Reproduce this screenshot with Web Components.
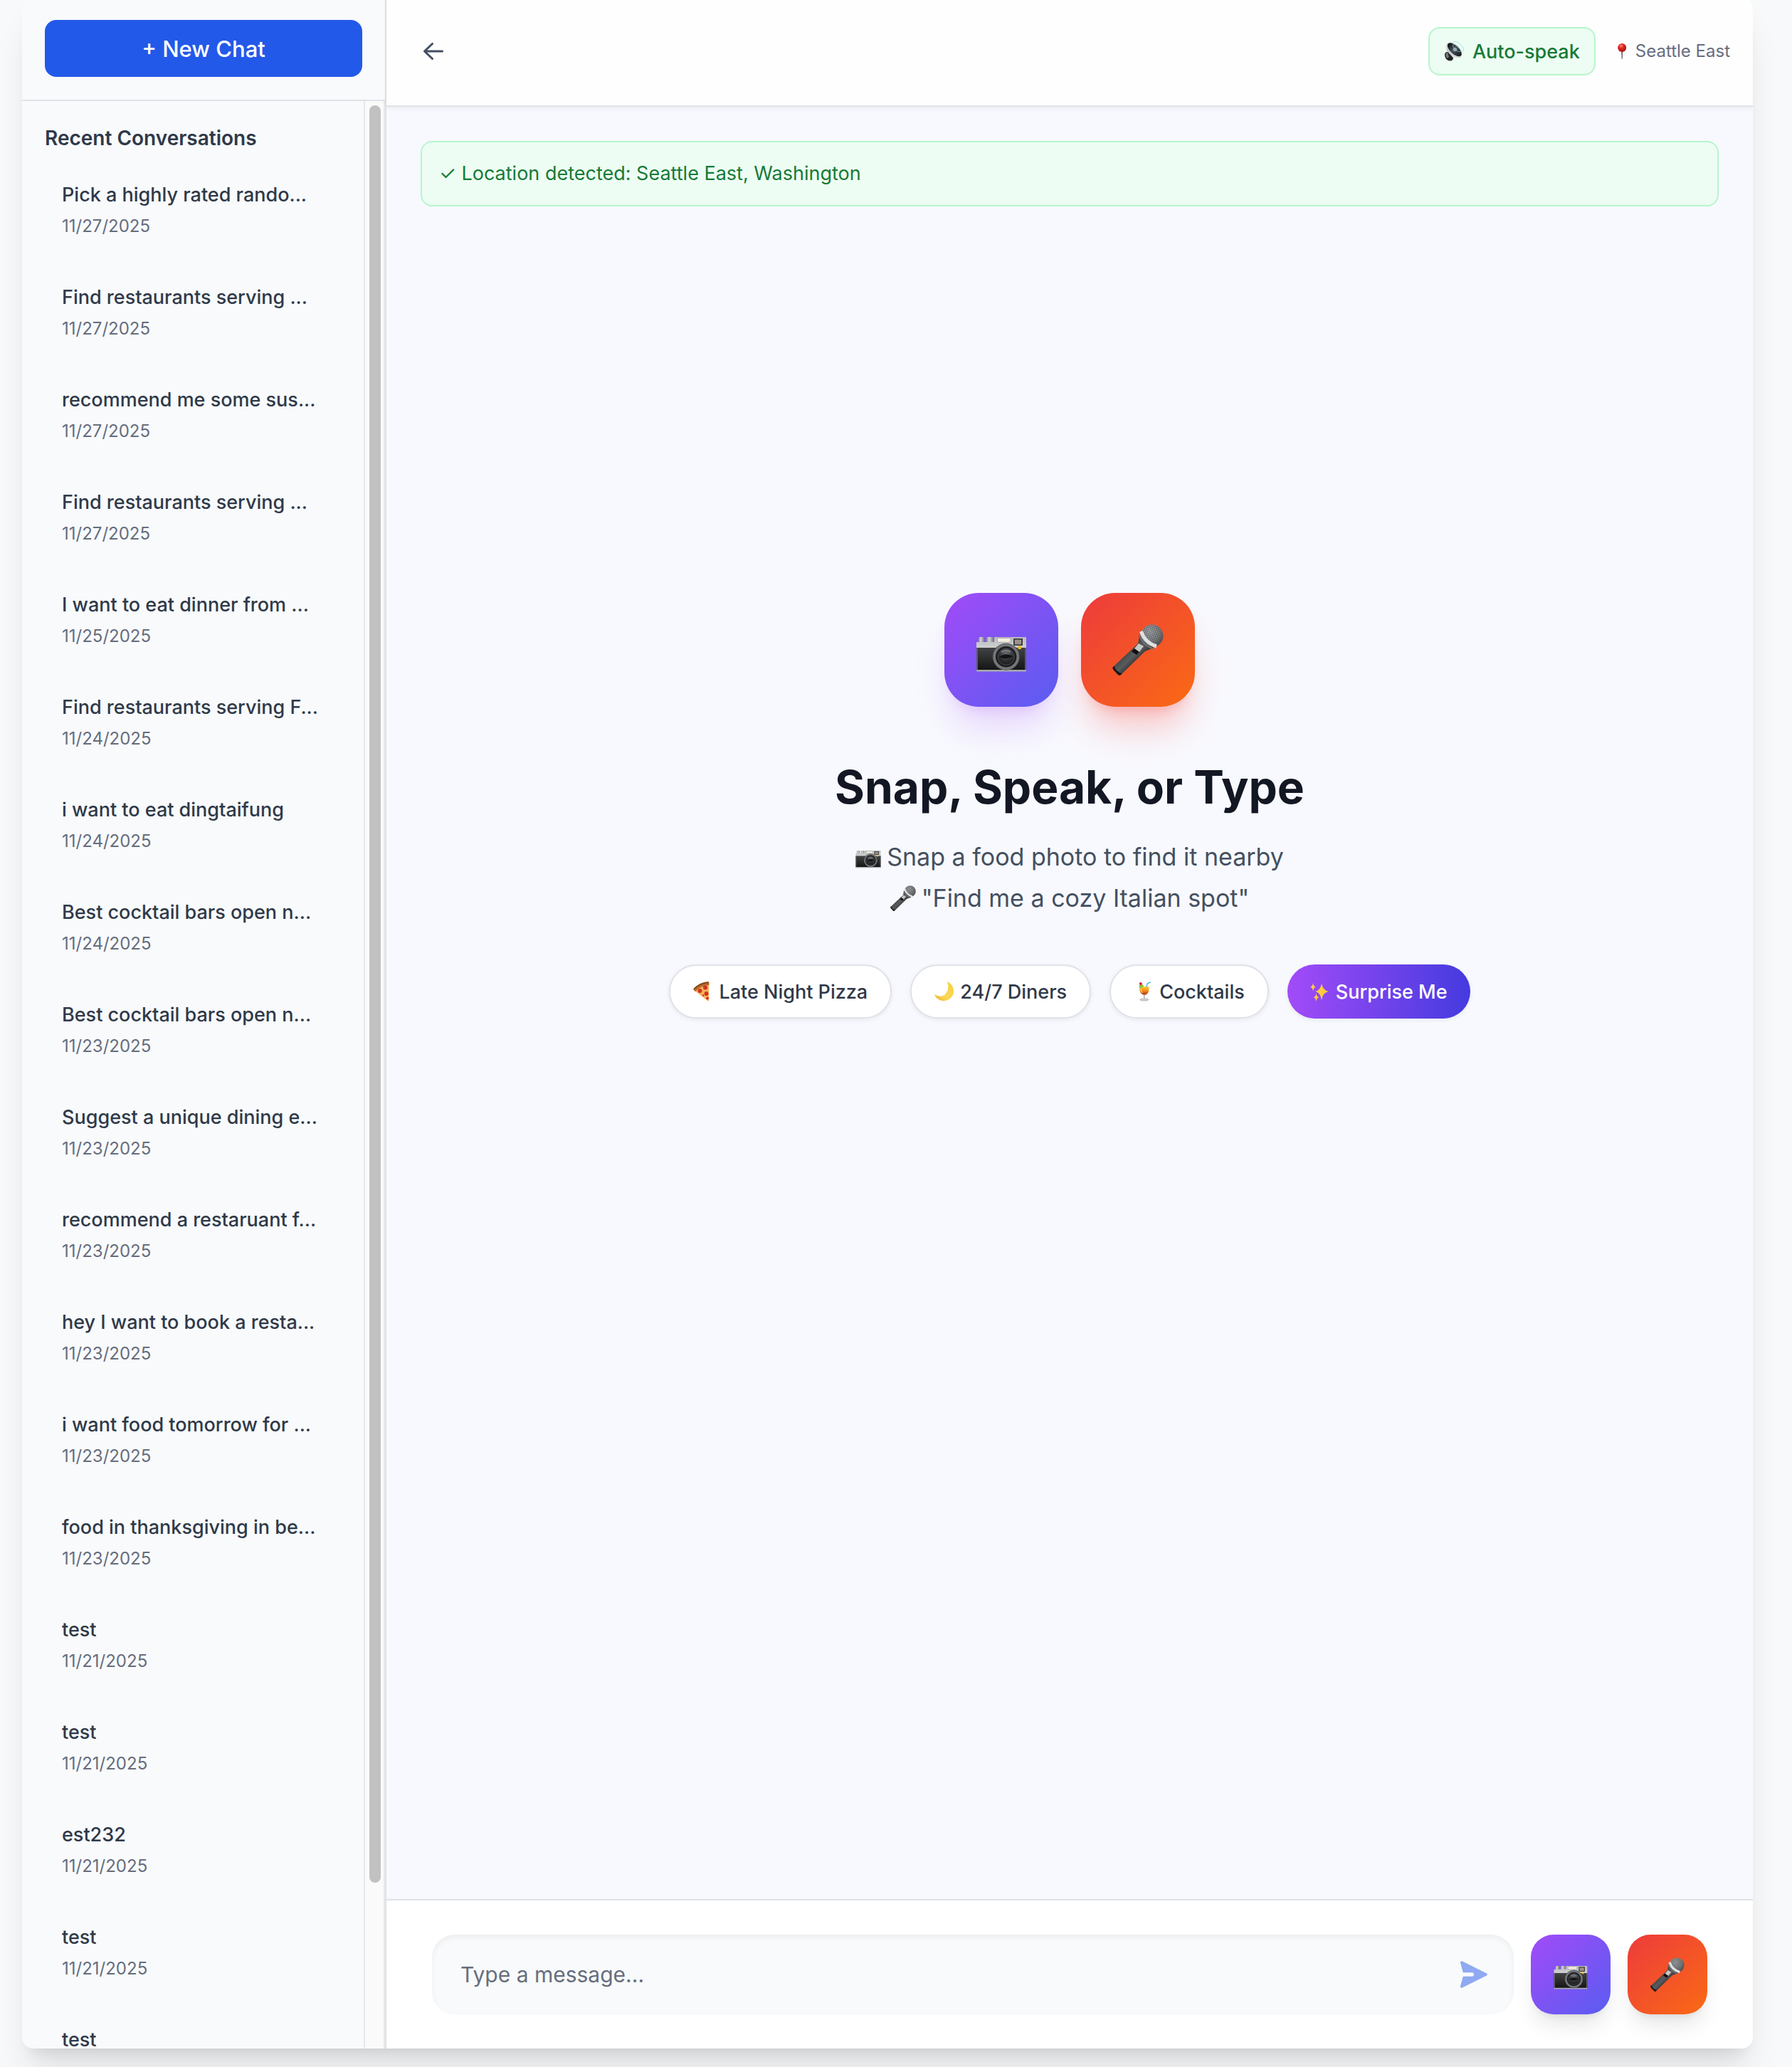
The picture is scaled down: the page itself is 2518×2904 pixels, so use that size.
<!DOCTYPE html>
<html lang="en">
<head>
<meta charset="utf-8">
<meta name="viewport" content="width=device-width, initial-scale=1">
<title>Chat</title>
<style>
  html, body {
    height: 100%;
  }
  body {
    margin: 0;
    background: #f8f9fb;
    color: #2f3948;
    font-family: Inter, "Liberation Sans", sans-serif;
    overflow: hidden;
  }
</style>
</head>
<body>
<chat-app>
  <chat-sidebar slot="sidebar">
    <conversation-item date="11/27/2025">Pick a highly rated rando...</conversation-item>
    <conversation-item date="11/27/2025">Find restaurants serving ...</conversation-item>
    <conversation-item date="11/27/2025">recommend me some sus...</conversation-item>
    <conversation-item date="11/27/2025">Find restaurants serving ...</conversation-item>
    <conversation-item date="11/25/2025">I want to eat dinner from ...</conversation-item>
    <conversation-item date="11/24/2025">Find restaurants serving F...</conversation-item>
    <conversation-item date="11/24/2025">i want to eat dingtaifung</conversation-item>
    <conversation-item date="11/24/2025">Best cocktail bars open n...</conversation-item>
    <conversation-item date="11/23/2025">Best cocktail bars open n...</conversation-item>
    <conversation-item date="11/23/2025">Suggest a unique dining e...</conversation-item>
    <conversation-item date="11/23/2025">recommend a restaruant f...</conversation-item>
    <conversation-item date="11/23/2025">hey I want to book a resta...</conversation-item>
    <conversation-item date="11/23/2025">i want food tomorrow for ...</conversation-item>
    <conversation-item date="11/23/2025">food in thanksgiving in be...</conversation-item>
    <conversation-item date="11/21/2025">test</conversation-item>
    <conversation-item date="11/21/2025">test</conversation-item>
    <conversation-item date="11/21/2025">est232</conversation-item>
    <conversation-item date="11/21/2025">test</conversation-item>
    <conversation-item>test</conversation-item>
  </chat-sidebar>

  <chat-header slot="header">Seattle East</chat-header>
  <status-banner>✓ Location detected: Seattle East, Washington</status-banner>
  <chat-hero>
    <span slot="title">Snap, Speak, or Type</span>
    <suggestion-chip icon="pizza">Late Night Pizza</suggestion-chip>
    <suggestion-chip icon="moon">24/7 Diners</suggestion-chip>
    <suggestion-chip icon="cocktail">Cocktails</suggestion-chip>
    <suggestion-chip icon="sparkles" primary>Surprise Me</suggestion-chip>
  </chat-hero>
  <chat-composer slot="footer"></chat-composer>
</chat-app>

<script>
// Small helper so every element gets an open shadow root with the same reset
class ChatBaseElement extends HTMLElement {
  constructor() {
    super();
    this.attachShadow({ mode: "open" });
  }

  connectedCallback() {
    this.shadowRoot.innerHTML = `
      <style>
        *, ::before, ::after {
          box-sizing: border-box;
          margin: 0;
          padding: 0;
        }
        :host {
          box-sizing: border-box;
          display: block;
        }
        button, input {
          font: inherit;
          color: inherit;
          border: 0;
          background: none;
        }
        button {
          cursor: pointer;
        }
      </style>
      ${this.render()}
    `;
  }
}

const ICONS = {
  camera: {
    box: 72,
    body: `
      <defs>
        <linearGradient id="silver" x1="0" y1="0" x2="0" y2="1">
          <stop offset="0" stop-color="#b9bbbd"/><stop offset="1" stop-color="#cfd1d3"/>
        </linearGradient>
        <linearGradient id="knob" x1="0" y1="0" x2="1" y2="0">
          <stop offset="0" stop-color="#8b8d90"/><stop offset=".4" stop-color="#d5d6d8"/><stop offset="1" stop-color="#77797c"/>
        </linearGradient>
        <linearGradient id="leather" x1="0" y1="0" x2="0" y2="1">
          <stop offset="0" stop-color="#414243"/><stop offset="1" stop-color="#141414"/>
        </linearGradient>
        <radialGradient id="glass" cx=".5" cy=".3" r=".7">
          <stop offset="0" stop-color="#6b6e72"/><stop offset=".6" stop-color="#2f3134"/><stop offset="1" stop-color="#191a1b"/>
        </radialGradient>
      </defs>
      <rect x="4" y="18" width="8" height="8" rx="2" fill="url(#knob)"/>
      <rect x="15" y="18" width="10" height="8" rx="2" fill="url(#knob)"/>
      <path d="M1 26q0-1 1-1h24V19q0-1 1-1h43q1 0 1 1v15H1z" fill="url(#silver)"/>
      <path d="M1 33h70v32H1z" fill="url(#leather)"/>
      <path d="M1 33h2v32H1zM69 33h2v32h-2z" fill="#5c5d5f"/>
      <rect x="1" y="64" width="70" height="2.6" rx="1" fill="#a9abad"/>
      <rect x="30.5" y="19.5" width="18.5" height="5.8" rx="1.5" fill="#f3eee2" stroke="#8d8d89" stroke-width=".6"/>
      <rect x="53" y="20" width="13" height="10" rx="1" fill="#37383a"/>
      <rect x="54.8" y="21.6" width="9.4" height="6.8" fill="#9b9189"/>
      <circle cx="42.7" cy="45.7" r="19" fill="#4c4e51"/>
      <circle cx="42.7" cy="45.7" r="16.6" fill="none" stroke="#74777a" stroke-width="3.4"/>
      <circle cx="42.7" cy="45.7" r="14.5" fill="#1d1e1f"/>
      <circle cx="42.7" cy="45.7" r="11.5" fill="url(#glass)" stroke="#55585b" stroke-width=".8"/>
      <path d="M33 46q9-7 19-1q-8 6-19 1z" fill="#121314"/>
      <path d="M36 39q7-4 13 0" fill="none" stroke="#888c90" stroke-width="1.5"/>
      <circle cx="61.7" cy="32.7" r="2.5" fill="#f5b92b"/>`
  },
  mic: {
    box: 72,
    body: `
      <defs>
        <linearGradient id="handle" x1="0" y1="0" x2="1" y2="1">
          <stop offset=".2" stop-color="#2a2a2b"/><stop offset=".5" stop-color="#5a5b5c"/><stop offset=".7" stop-color="#1f1f20"/>
        </linearGradient>
        <radialGradient id="head" cx=".4" cy=".3" r=".75">
          <stop offset="0" stop-color="#b3b5b7"/><stop offset=".6" stop-color="#85878a"/><stop offset="1" stop-color="#4a4b4d"/>
        </radialGradient>
        <pattern id="mesh" width="2.6" height="2.6" patternUnits="userSpaceOnUse" patternTransform="rotate(20)">
          <path d="M0 0h2.6M0 0v2.6" stroke="#3d3e40" stroke-width=".9"/>
        </pattern>
      </defs>
      <path d="M38 16 36 27 1 60q-1 2 .5 4l6.5 7q2 1.5 4 0L46 38l12-5z" fill="url(#handle)"/>
      <path d="M1 60q-1 2 .5 4l6.5 7q2 1.5 4 0l1.5-1.5Q4 66 2.5 58.5z" fill="#171718"/>
      <circle cx="55.7" cy="16.3" r="15.7" fill="url(#head)"/>
      <circle cx="55.7" cy="16.3" r="15.7" fill="url(#mesh)"/>
      <path d="M40.500 10q5 16 21.500 21" fill="none" stroke="#dfe0e2" stroke-width="5"/>
      <path d="M38 15q4 14 19 19.5" fill="none" stroke="#6c6d6f" stroke-width="2.5"/>
      <path d="m27 38 8-8 7 4-8 9z" fill="#0f0f10"/>
      <path d="m31 34 6-7 7 4-6 8z" fill="#c6c6c7"/>`
  },
  speaker: {
    box: 28,
    body: `
      <defs>
        <linearGradient id="cone" x1="0" y1="0" x2="1" y2="0">
          <stop offset="0" stop-color="#0c0e0f"/><stop offset=".45" stop-color="#4a5358"/><stop offset="1" stop-color="#16191b"/>
        </linearGradient>
      </defs>
      <ellipse cx="20" cy="7.5" rx="9.5" ry="4.5" transform="rotate(42 20 7.5)" fill="none" stroke="#9fe3e8" stroke-width=".9"/>
      <path d="M1 19q0-4 4-4l8 8q0 4-4 4.500Q2 27.500 1 19z" fill="#232426"/>
      <path d="M2 18q1-2 3-2l2 6-3 2z" fill="#77797c"/>
      <path d="M3.500 5q-1 8 5 13t15 5z" fill="#5d6063"/>
      <ellipse cx="14" cy="12.500" rx="13.500" ry="7.500" transform="rotate(43 14 12.5)" fill="#d3d5d8"/>
      <ellipse cx="14.800" cy="11.800" rx="12.300" ry="6" transform="rotate(43 14.8 11.8)" fill="url(#cone)"/>
      <circle cx="15.500" cy="11.500" r="2.800" fill="#8ba4ad"/>
      <ellipse cx="18" cy="9.500" rx="7" ry="3" transform="rotate(42 18 9.5)" fill="none" stroke="#8fd5dc" stroke-width=".6"/>`
  },
  pin: {
    box: 26,
    body: `
      <defs>
        <radialGradient id="ball" cx=".4" cy=".3" r=".7">
          <stop offset="0" stop-color="#ff9a90"/><stop offset=".35" stop-color="#e32d26"/><stop offset="1" stop-color="#a80f10"/>
        </radialGradient>
      </defs>
      <path d="M12 12h2.4l-.6 12h-1.2z" fill="#84705f"/>
      <circle cx="13.2" cy="8" r="6" fill="url(#ball)"/>`
  },
  pizza: {
    box: 28,
    body: `
      <path d="M1 12 21 27.5q1 .5 1-1V3z" fill="#f2b45a"/>
      <path d="M0 11Q8 1 21 0q1.5 0 1.5 2v3Q10 6 3 14z" fill="#b5672a"/>
      <path d="M1 10.5Q9 2 21.5 1.5" fill="none" stroke="#7f431b" stroke-width="1.5"/>
      <g fill="#d5301f">
        <circle cx="17" cy="8.5" r="3"/><circle cx="9.5" cy="13" r="2.9"/>
        <circle cx="18.500" cy="17" r="2.9"/><circle cx="20" cy="23.5" r="2"/>
        <circle cx="14" cy="19.5" r="1.3"/>
      </g>`
  },
  moon: {
    box: 28,
    body: `
      <defs>
        <linearGradient id="glow" x1="1" y1="0" x2="0" y2="1">
          <stop offset="0" stop-color="#f7cf3e"/><stop offset=".6" stop-color="#fbd956"/><stop offset="1" stop-color="#e9b12f"/>
        </linearGradient>
      </defs>
      <path d="M18 0q9 4 9 13.5Q27 20 22 24t-11 3Q3 26 0 18q8 5 14 1Q22 12 18 0z" fill="url(#glow)"/>`
  },
  cocktail: {
    box: 28,
    body: `
      <defs>
        <linearGradient id="drink" x1="0" y1="0" x2="0" y2="1">
          <stop offset="0" stop-color="#ffcf3f"/><stop offset=".5" stop-color="#f98c17"/><stop offset="1" stop-color="#a52c10"/>
        </linearGradient>
      </defs>
      <path d="m17 9 2.500-6.500L24 1" fill="none" stroke="#5bbbe8" stroke-width="1.6"/>
      <path d="M8.500 7H21q1.500 7-2.500 10.500-3.500 2.500-7 0Q7 14 8.500 7z" fill="url(#drink)"/>
      <path d="M7.500 6.500q0-2 3.500-2.500 3 0 3 2.500L10 10q-2-1-2.500-3.500z" fill="#8cc43c"/>
      <circle cx="9.800" cy="3" r="2" fill="#dd1f30"/>
      <path d="M14.200 19h1.200v6h-1.200z" fill="#a99c96"/>
      <ellipse cx="14.800" cy="25.500" rx="6" ry="1.500" fill="#d6d4d3" stroke="#8f8a87" stroke-width=".6"/>
      <path d="M10.500 10q-.5 4 2 6" fill="none" stroke="#ffe7a0" stroke-width="1"/>`
  },
  sparkles: {
    box: 28,
    body: `
      <g fill="#ffcc3e">
        <path d="M16 2.5q1.500 10 10 11.5-8.500 1.500-10 12-1.500-10.500-9-12 7.500-1.500 9-11.500z"/>
        <path d="M4 2q.7 5 4 5.500-3.300.8-4 6-.7-5.200-4-6Q3.300 7 4 2z"/>
        <path d="M8.500 16.500q.7 5 4 5.500-3.300.8-4 6-.7-5.200-4-6 3.300-.5 4-5.500z"/>
      </g>`
  },
  back: {
    box: 20,
    body: `<path fill="currentColor" fill-rule="evenodd" d="M17 10a.75.75 0 0 1-.75.75H5.612l4.158 3.960a.75.75 0 1 1-1.040 1.080l-5.500-5.250a.75.75 0 0 1 0-1.080l5.500-5.250a.75.75 0 1 1 1.040 1.080L5.612 9.250H16.250A.75.75 0 0 1 17 10z"/>`
  },
  send: {
    box: 38,
    body: `<path fill="currentColor" d="M.1 2.700C-.4.900 1.200-.4 2.900.4L37 17.600c1.200.7 1.200 2.100 0 2.800L2.900 37.600c-1.700.8-3.300-.5-2.800-2.300L3.800 21.700h12.500a2.700 2.700 0 0 0 0-5.400H3.800z"/>`
  }
};

class ChatIcon extends ChatBaseElement {
  render() {
    const icon = ICONS[this.getAttribute("name")];
    return `
      <style>
        :host {
          display: inline-block;
          flex: none;
          width: var(--icon-size, 28px);
          height: var(--icon-size, 28px);
        }
        svg {
          display: block;
          width: 100%;
          height: 100%;
        }
      </style>
      <svg viewBox="0 0 ${icon.box} ${icon.box}" aria-hidden="true">${icon.body}</svg>
    `;
  }
}

class ChatApp extends ChatBaseElement {
  render() {
    return `
      <style>
        :host {
          height: 100vh;
          padding: 0 55px 26px 31px;
        }
        .card {
          display: flex;
          height: calc(100% + 4px);
          margin-top: -4px;
          border-radius: 16px;
          overflow: hidden;
          background: #fff;
          box-shadow: 0 40px 50px -10px rgba(0, 0, 0, .1), 0 16px 20px -12px rgba(0, 0, 0, .1);
        }
        main {
          flex: 1;
          display: flex;
          flex-direction: column;
          min-width: 0;
        }
        .messages {
          flex: 1;
          min-height: 0;
          padding: 48px;
          background: #f8f9fe;
        }
      </style>
      <div class="card">
        <slot name="sidebar"></slot>
        <main>
          <slot name="header"></slot>
          <div class="messages"><slot></slot></div>
          <slot name="footer"></slot>
        </main>
      </div>
    `;
  }
}

class ChatSidebar extends ChatBaseElement {
  render() {
    return `
      <style>
        :host {
          flex: none;
          display: flex;
          flex-direction: column;
          width: 512px;
          border-right: 2px solid #e1e2e8;
          background: #f8fafc;
        }
        .top {
          padding: 32px;
          border-bottom: 2px solid #e1e2e8;
        }
        .top button {
          width: 100%;
          height: 80px;
          border-radius: 16px;
          background: #2359e9;
          color: #fff;
          font-size: 31px;
          font-weight: 500;
        }
        .scroller {
          flex: 1;
          display: flex;
          min-height: 0;
        }
        .list {
          flex: 1;
          min-width: 0;
          padding: 32px;
          overflow: hidden;
        }
        h2 {
          margin-bottom: 16px;
          font-size: 28px;
          line-height: 40px;
          font-weight: 600;
        }
        nav {
          display: flex;
          flex-direction: column;
          gap: 16px;
        }
        .track {
          width: 30px;
          padding: 6px;
          border: solid #e8e8e8;
          border-width: 0 2px;
          background: #fafafa;
        }
        .thumb {
          width: 16px;
          height: calc(100% * 11 / 12);
          border-radius: 8px;
          background: #c1c1c1;
        }
      </style>
      <div class="top"><button type="button">+ New Chat</button></div>
      <div class="scroller">
        <div class="list">
          <h2>Recent Conversations</h2>
          <nav><slot></slot></nav>
        </div>
        <div class="track"><div class="thumb"></div></div>
      </div>
    `;
  }
}

class ConversationItem extends ChatBaseElement {
  render() {
    const date = this.getAttribute("date");
    return `
      <style>
        button {
          display: block;
          width: 100%;
          padding: 24px;
          border-radius: 16px;
          text-align: left;
          white-space: nowrap;
        }
        .title {
          display: block;
          font-size: 27px;
          line-height: 40px;
          font-weight: 500;
        }
        .date {
          display: block;
          margin-top: 8px;
          font-size: 24px;
          line-height: 32px;
          color: #676d7c;
        }
      </style>
      <button type="button">
        <span class="title"><slot></slot></span>
        ${date ? `<span class="date">${date}</span>` : ""}
      </button>
    `;
  }
}

class ChatHeader extends ChatBaseElement {
  render() {
    return `
      <style>
        :host {
          position: relative;
          flex: none;
          border-bottom: 2px solid #e1e2e8;
          background: #fefefe;
          box-shadow: 0 2px 6px rgba(0, 0, 0, .06);
        }
        header {
          display: flex;
          align-items: center;
          justify-content: space-between;
          height: 152px;
          padding: 0 32px;
        }
        .back {
          display: flex;
          padding: 14px;
          border-radius: 16px;
          color: #445060;
          --icon-size: 40px;
        }
        .right {
          display: flex;
          align-items: center;
          gap: 24px;
        }
        .speak {
          display: flex;
          align-items: center;
          gap: 12px;
          height: 68px;
          padding: 0 20px;
          border: 2px solid #b5f6cc;
          border-radius: 16px;
          background: #edfdf3;
          color: #177a37;
          font-size: 27px;
          font-weight: 500;
        }
        .place {
          display: flex;
          align-items: center;
          gap: 6px;
          font-size: 24px;
          line-height: 32px;
          color: #676d80;
          --icon-size: 26px;
        }
      </style>
      <header>
        <button class="back" type="button" aria-label="Back"><chat-icon name="back"></chat-icon></button>
        <div class="right">
          <button class="speak" type="button" aria-pressed="true"><chat-icon name="speaker"></chat-icon>Auto-speak</button>
          <div class="place"><chat-icon name="pin"></chat-icon><span><slot></slot></span></div>
        </div>
      </header>
    `;
  }
}

class StatusBanner extends ChatBaseElement {
  render() {
    return `
      <style>
        :host {
          padding: 24px;
          border: 2px solid #b5f6cc;
          border-radius: 16px;
          background: #edfdf3;
          color: #177a37;
          font-size: 27px;
          line-height: 40px;
        }
      </style>
      <slot></slot>
    `;
  }
}

class ActionTile extends ChatBaseElement {
  render() {
    return `
      <style>
        :host {
          flex: none;
          width: var(--tile-size, 112px);
          height: var(--tile-size, 112px);
          --icon-size: 48px;
        }
        button {
          display: flex;
          align-items: center;
          justify-content: center;
          width: 100%;
          height: 100%;
          border-radius: 32px;
          background: linear-gradient(135deg, #a24bf8, #595cf0);
          box-shadow: 0 20px 30px -6px rgba(0, 0, 0, .1), 0 8px 12px -8px rgba(0, 0, 0, .1);
        }
        :host([kind="mic"]) button {
          background: linear-gradient(135deg, #ed3b3c, #fa6a14);
        }
        :host([large]) {
          --tile-size: 160px;
          --icon-size: 72px;
        }
        :host([large]) button {
          border-radius: 48px;
          box-shadow: 0 40px 50px -10px rgba(168, 85, 247, .2), 0 16px 20px -12px rgba(168, 85, 247, .2);
        }
        :host([large][kind="mic"]) button {
          box-shadow: 0 40px 50px -10px rgba(251, 60, 50, .26), 0 16px 20px -12px rgba(251, 60, 50, .26);
        }
      </style>
      <button type="button" aria-label="${this.getAttribute("label")}">
        <chat-icon name="${this.getAttribute("kind")}"></chat-icon>
      </button>
    `;
  }
}

class SuggestionChip extends ChatBaseElement {
  render() {
    return `
      <style>
        button {
          display: flex;
          align-items: center;
          gap: 8px;
          height: 76px;
          padding: 0 32px;
          border: 2px solid #e1e2e8;
          border-radius: 38px;
          background: #fff;
          box-shadow: 0 2px 6px rgba(0, 0, 0, .07);
          font-size: 27px;
          font-weight: 500;
          white-space: nowrap;
        }
        :host([primary]) button {
          padding: 0 32px;
          border: 0;
          background: linear-gradient(90deg, #a24bf8, #443bdf);
          color: #fff;
        }
      </style>
      <button type="button"><chat-icon name="${this.getAttribute("icon")}"></chat-icon><span><slot></slot></span></button>
    `;
  }
}

class ChatHero extends ChatBaseElement {
  render() {
    return `
      <style>
        :host {
          display: flex;
          flex-direction: column;
          align-items: center;
          justify-content: center;
          height: 58vh;
          text-align: center;
        }
        .tiles {
          display: flex;
          gap: 32px;
          margin-bottom: 68px;
        }
        h1 {
          margin-bottom: 24px;
          color: #121723;
          font-size: 64px;
          line-height: 90px;
          font-weight: 700;
        }
        .hints {
          margin-bottom: 64px;
          color: #445060;
          font-size: 34px;
          line-height: 58px;
          --icon-size: 36px;
        }
        .hints p {
          display: flex;
          align-items: center;
          justify-content: center;
          gap: 8px;
        }
        .chips {
          display: flex;
          flex-wrap: wrap;
          justify-content: center;
          gap: 26px;
        }
      </style>
      <div class="tiles">
        <action-tile kind="camera" label="Take a photo" large></action-tile>
        <action-tile kind="mic" label="Speak" large></action-tile>
      </div>
      <h1><slot name="title"></slot></h1>
      <div class="hints">
        <p><chat-icon name="camera"></chat-icon><span>Snap a food photo to find it nearby</span></p>
        <p><chat-icon name="mic"></chat-icon><span>"Find me a cozy Italian spot"</span></p>
      </div>
      <div class="chips"><slot></slot></div>
    `;
  }
}

class ChatComposer extends ChatBaseElement {
  render() {
    return `
      <style>
        :host {
          flex: none;
          border-top: 2px solid #e1e2e8;
          background: #fff;
        }
        form {
          display: flex;
          align-items: center;
          gap: 24px;
          padding: 48px 64px;
        }
        .field {
          flex: 1;
          display: flex;
          align-items: center;
          height: 112px;
          padding-right: 37px;
          border-radius: 32px;
          background: #f8fafb;
          box-shadow: inset 0 4px 8px rgba(0, 0, 0, .05);
        }
        input {
          flex: 1;
          min-width: 0;
          height: 100%;
          padding: 0 40px;
          outline: 0;
          font-size: 30px;
        }
        input::placeholder {
          color: #666e7c;
          opacity: 1;
        }
        .send {
          display: flex;
          color: #8fa9f2;
          --icon-size: 38px;
        }
      </style>
      <form>
        <div class="field">
          <input type="text" aria-label="Message" placeholder="Type a message...">
          <button class="send" type="button" aria-label="Send"><chat-icon name="send"></chat-icon></button>
        </div>
        <action-tile kind="camera" label="Take a photo"></action-tile>
        <action-tile kind="mic" label="Speak"></action-tile>
      </form>
    `;
  }
}

const elements = {
  "chat-icon": ChatIcon,
  "chat-app": ChatApp,
  "chat-sidebar": ChatSidebar,
  "conversation-item": ConversationItem,
  "chat-header": ChatHeader,
  "status-banner": StatusBanner,
  "action-tile": ActionTile,
  "suggestion-chip": SuggestionChip,
  "chat-hero": ChatHero,
  "chat-composer": ChatComposer
};

Object.entries(elements).forEach(([tagName, element]) => {
  customElements.define(tagName, element);
});
</script>
</body>
</html>
